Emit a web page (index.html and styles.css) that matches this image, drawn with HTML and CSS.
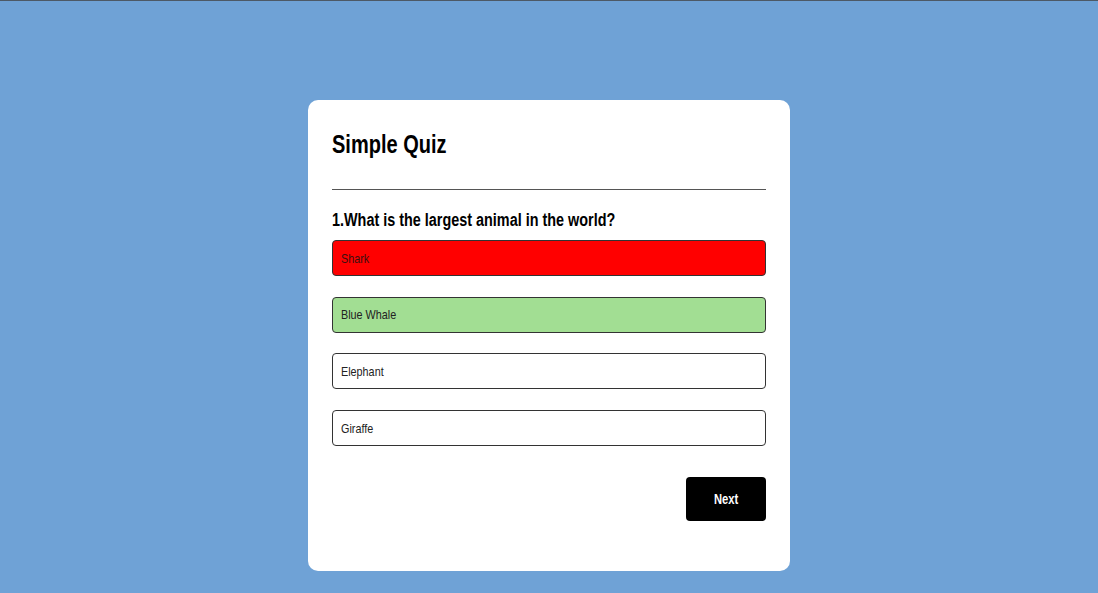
FILE: index.html
```html
<!DOCTYPE html>
<html lang="en">
<head>
<meta charset="utf-8">
<title>Simple Quiz</title>
<link rel="stylesheet" href="styles.css">
</head>
<body>
  <div class="app">
    <h1 class="title"><span class="narrow">Simple Quiz</span></h1>
    <div class="quiz">
      <h2 class="question"><span class="narrow">1.What is the largest animal in the world?</span></h2>
      <div class="answers">
        <button class="btn incorrect"><span class="narrow">Shark</span></button>
        <button class="btn correct"><span class="narrow">Blue Whale</span></button>
        <button class="btn"><span class="narrow">Elephant</span></button>
        <button class="btn"><span class="narrow">Giraffe</span></button>
      </div>
      <div class="actions">
        <button class="next-btn"><span class="narrow center">Next</span></button>
      </div>
    </div>
  </div>
</body>
</html>
```

FILE: styles.css
```css
* {
  box-sizing: border-box;
}

html, body {
  margin: 0;
  padding: 0;
}

body {
  background: #6fa2d6;
  border-top: 1px solid #4d5966;
  min-height: 593px;
  font-family: "Liberation Sans", Arial, sans-serif;
  color: #000;
}

.narrow {
  display: inline-block;
  white-space: nowrap;
  transform: scaleX(0.8);
  transform-origin: left center;
}

.narrow.center {
  transform-origin: center center;
}

.app {
  width: 482px;
  margin: 99px auto 0;
  background: #fff;
  border-radius: 10px;
  padding: 30px 24px 50px;
}

.title {
  margin: 0;
  font-size: 25px;
  font-weight: 700;
  padding-bottom: 30px;
  border-bottom: 1px solid #555;
}

.question {
  margin: 20px 0 0;
  font-size: 18px;
  font-weight: 700;
  color: #000;
}

.answers {
  display: flex;
  flex-direction: column;
  gap: 20.7px;
  margin-top: 9px;
}

.btn {
  display: block;
  width: 100%;
  height: 36px;
  background: #fff;
  border: 1px solid #333;
  border-radius: 4px;
  padding: 0 8px;
  text-align: left;
  font-family: inherit;
  font-size: 13.5px;
  color: #222;
}

.btn.incorrect {
  background: #ff0000;
  color: #3a1010;
}

.btn.correct {
  background: #a2de93;
  color: #222;
}

.actions {
  display: flex;
  justify-content: flex-end;
  margin-top: 31px;
}

.next-btn {
  width: 80px;
  height: 44px;
  background: #000;
  color: #fff;
  border: none;
  border-radius: 4px;
  font-family: inherit;
  font-size: 14px;
  font-weight: 700;
}
```
